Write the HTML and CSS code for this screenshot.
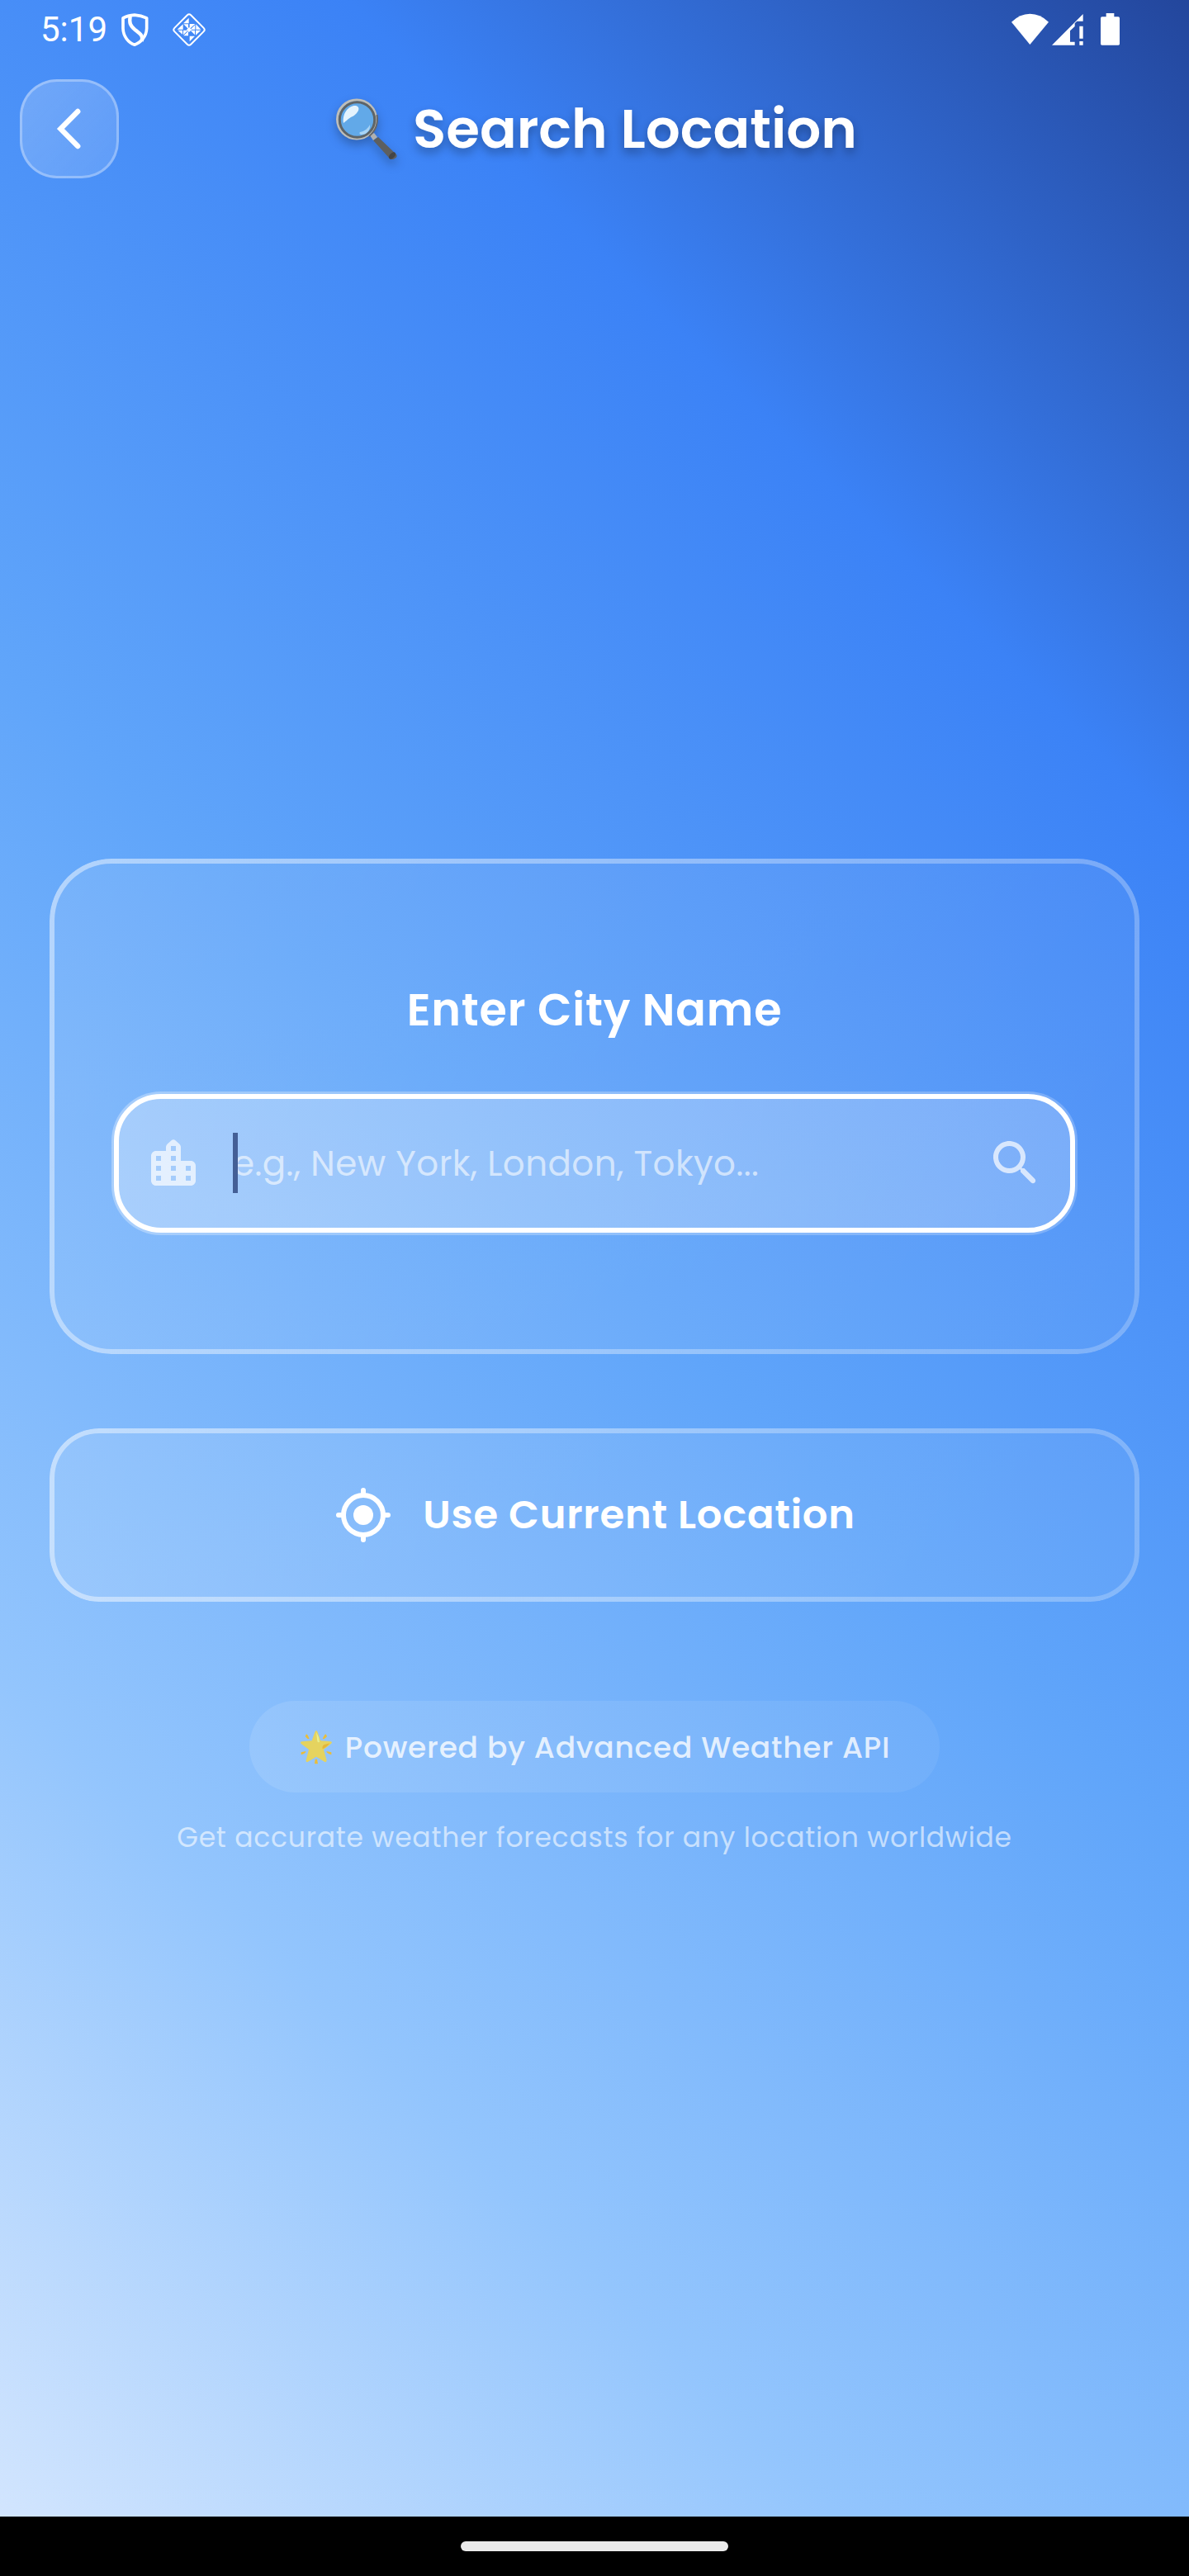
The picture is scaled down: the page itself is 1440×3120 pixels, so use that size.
FILE: index.html
```html
<!DOCTYPE html>
<html lang="en">
<head>
<meta charset="utf-8">
<title>Search Location</title>
<link rel="stylesheet" href="styles.css">
</head>
<body>
<div class="screen">
  <div class="status">
    <span class="clock">5:19</span>
    <svg class="shield" viewBox="0 0 105 125" fill="none" stroke="#fff" stroke-width="11" stroke-linejoin="round">
      <path d="M51 9 C37 10 20 14 9 20 V58 C10 86 28 110 51 117 C74 110 94 86 95 58 V20 C82 14 65 10 51 9 Z"/>
      <path d="M35 14 C31 38 35 47 52 62 C72 78 83 84 77 104" stroke-width="13"/>
    </svg>
    <svg class="diamond" viewBox="0 0 126 126">
      <rect x="21" y="21" width="84" height="84" rx="9" transform="rotate(45 63 63)" fill="none" stroke="#fff" stroke-width="6"/>
      <g fill="#fff">
        <path d="M62 20 V40 H42 Z M65 42 H85 L65 60 Z M41 43 V62 H20 Z M43 43 H60 V60 Z M88 43 L106 62 H88 Z M85 45 V62 H68 Z M63 54 L72 63 L63 72 L54 63 Z M42 65 H59 L42 82 Z M22 65 H39 V80 Z M84 65 H68 L84 82 Z M87 65 H106 L87 83 Z M43 85 H60 V68 Z M65 86 H84 L65 106 Z"/>
      </g>
    </svg>
    <svg class="signals" viewBox="0 0 393 117" fill="#fff">
      <path d="M0 32 Q30 2 67 2 Q105 2 135 32 L67 114 Z"/>
      <path d="M147 116 L260 3 V29 H238 L230 37 V48 L213 64 V104 H230 V116 Z M247 47 H260 V92 H247 Z M247 102 H260 V116 H247 Z"/>
      <path d="M344 0 H373 V13 H388 Q393 13 393 18 V112 Q393 116 388 116 H329 Q324 116 324 112 V18 Q324 13 329 13 H344 Z"/>
    </svg>
  </div>

  <header class="header">
    <button class="back" aria-label="Back">
      <svg viewBox="0 0 72 72" fill="none" stroke="#fff" stroke-width="6.4" stroke-linecap="round" stroke-linejoin="miter"><path d="M46.2 15 L25.4 36 L46.2 57"/></svg>
    </button>
    <h1 class="title">
      <svg class="lens" viewBox="0 0 74 74">
        <path d="M45 51 L51 47 L73 68 Q75 71 71 73 Q67 76 64 72 Z" fill="#5d5f60"/>
        <ellipse cx="68" cy="69.500" rx="3" ry="5" transform="rotate(45 68 69.500)" fill="#454545"/>
        <path d="M41 45 L46 42 L50 47 L45 51 Z" fill="#b0b0b0"/>
        <circle cx="25" cy="25.500" r="23.500" fill="#62a9e8" stroke="#bdbdb9" stroke-width="3"/>
        <circle cx="25.500" cy="26" r="21.200" fill="none" stroke="#5e6467" stroke-width="3"/>
        <path d="M49.500 20 Q52 36 40 46" fill="none" stroke="#666" stroke-width="2"/>
        <path d="M9 30 C7 18 16 8 24 9 C31 11 26 19 20 22 C14 25 12 28 9 30 Z" fill="#e4f3fd"/>
        <path d="M29 41 C35 40 39 36 41 32 C42 39 36 45 30 44 C28 43 28 42 29 41 Z" fill="#a9d4f5"/>
      </svg>
      <span class="title-text">Search Location</span>
    </h1>
  </header>

  <main class="main">
    <section class="glass card">
      <h2 class="label">Enter City Name</h2>
      <div class="field-ring">
        <div class="field">
          <svg class="icon city" viewBox="0 0 24 24" fill="#fff"><path fill-rule="evenodd" d="M15 11V5.600c0-.6-.2-1-.6-1.400l-1.700-1.500c-.4-.4-1-.4-1.400 0L9.600 4.200C9.200 4.600 9 5 9 5.600V7H5c-1.100 0-2 .9-2 2v10c0 1.100.9 2 2 2h14c1.100 0 2-.9 2-2v-6c0-1.100-.9-2-2-2h-4zM7 19H5v-2h2v2zm0-4H5v-2h2v2zm0-4H5V9h2v2zm6 8h-2v-2h2v2zm0-4h-2v-2h2v2zm0-4h-2V9h2v2zm0-4h-2V5h2v2zm6 12h-2v-2h2v2zm0-4h-2v-2h2v2z"/></svg>
          <div class="entry"><span class="caret"></span><span class="hint">e.g., New York, London, Tokyo...</span></div>
          <svg class="icon search" viewBox="0 0 24 24" fill="#fff"><path d="M15.500 14h-.790l-.280-.270c1.200-1.400 1.820-3.310 1.480-5.340-.470-2.780-2.790-5-5.590-5.340-4.230-.520-7.780 3.040-7.270 7.270.340 2.800 2.560 5.120 5.340 5.590 2.030.340 3.940-.280 5.340-1.480l.270.280v.790l4.250 4.250c.410.410 1.080.410 1.490 0 .410-.410.410-1.080 0-1.490L15.500 14zm-6 0C7.010 14 5 11.990 5 9.500S7.010 5 9.500 5 14 7.010 14 9.500 11.990 14 9.500 14z"/></svg>
        </div>
      </div>
    </section>

    <button class="glass locate">
      <svg class="icon" viewBox="0 0 24 24" fill="none" stroke="#fff" stroke-width="2"><circle cx="12" cy="12" r="4" fill="#fff" stroke="none"/><circle cx="12" cy="12" r="8"/><path d="M12 2v2M12 20v2M2 12h2M20 12h2" stroke-linecap="round"/></svg>
      <span>Use Current Location</span>
    </button>

    <div class="powered">
      <svg class="star" viewBox="0 0 118 126">
        <path d="M59 3 Q62 3 64 9 L75 40 L112 43 Q119 45 113 51 L86 72 L97 111 Q97 119 90 117 L59 98 L28 117 Q20 119 22 111 L32 72 L4 51 Q-1 45 6 43 L43 40 L54 9 Q56 3 59 3 Z" fill="#e5d35f"/>
        <path d="M59 9 Q70 26 71 44 Q66 48 63 42 Z" fill="#e8f08e"/><path d="M109 49 L88 54 Q79 60 82 70 Q92 68 109 49 Z" fill="#e3b63a"/>
        <path d="M22 17 Q28 15 34 34 Q26 34 19 25 Z M95 17 Q89 15 82 34 Q91 34 98 25 Z M4 82 L21 78 Q21 87 4 91 Z M114 82 L96 78 Q97 87 114 91 Z M55 107 H62 L65 124 H53 Z" fill="#e9bd3c"/>
      </svg>
      <span>Powered by Advanced Weather API</span>
    </div>
    <p class="note">Get accurate weather forecasts for any location worldwide</p>
  </main>

  <div class="navbar"><span class="handle"></span></div>
</div>
</body>
</html>
```
FILE: styles.css
```css
* { box-sizing: border-box; margin: 0; }

body {
  width: 1440px;
  font-family: Poppins, Inter, "Open Sans", sans-serif;
  color: #fff;
  white-space: nowrap;
}

button { font: inherit; color: inherit; padding: 0; }
svg { display: block; flex: none; }

.screen {
  display: flex;
  flex-direction: column;
  width: 1440px;
  height: 3120px;
  background: linear-gradient(225deg, #23469c 0%, #3b82f6 22.700%, #60a5fa 50%, #93c5fd 77.300%, #d2e5fe 100%) 0 0 / 100% 3048px no-repeat;
}

/* Status bar */
.status {
  display: flex;
  align-items: flex-start;
  height: 72px;
  padding: 15px 84px 0 49px;
}
.clock { font: 400 42px/42px Roboto, sans-serif; width: 97px; }
.shield { width: 35px; height: 42px; }
.diamond { width: 42px; height: 42px; margin-left: 27px; }
.signals { width: 131px; height: 39px; margin: 1px 0 0 auto; }

/* Header */
.header {
  display: grid;
  grid-template-columns: 120px 1fr 120px;
  align-items: center;
  padding: 24px 24px 0;
}
.back {
  display: flex;
  align-items: center;
  justify-content: center;
  width: 120px;
  height: 120px;
  border: 3px solid rgba(255, 255, 255, .3);
  border-radius: 45px;
  background: linear-gradient(135deg, rgba(255, 255, 255, .22), rgba(255, 255, 255, .12)) border-box;
}
.back svg { width: 72px; height: 72px; }
.title {
  display: flex;
  align-items: center;
  justify-content: center;
  gap: 19px;
  padding-left: 5px;
  font-size: 66px;
  font-weight: 600;
  line-height: 84px;
}
.lens { width: 74px; height: 74px; filter: drop-shadow(0 6px 6px rgba(0, 0, 0, .25)); }
.title-text { text-shadow: 0 6px 12px rgba(0, 0, 0, .3); }

/* Frosted panels */
.main {
  display: flex;
  flex-direction: column;
  align-items: center;
  flex: 1;
  padding: 823.500px 60px 0;
}
.glass { position: relative; width: 1320px; border: 0; }
.glass::before {
  content: "";
  position: absolute;
  inset: 0;
  padding: 6px;
  border-radius: inherit;
  background: linear-gradient(var(--slant), rgba(255, 255, 255, .45), rgba(255, 255, 255, .22));
  mask: linear-gradient(#000 0 0) content-box exclude, linear-gradient(#000 0 0);
}
.card {
  --slant: 114.400deg;
  height: 600px;
  padding: 144px 75px;
  border-radius: 75px;
  background: linear-gradient(114.400deg, rgba(255, 255, 255, .1), rgba(255, 255, 255, .05));
}
.label {
  height: 138px;
  font-size: 54px;
  font-weight: 600;
  line-height: 78px;
  letter-spacing: .8px;
  text-align: center;
}
.field-ring {
  height: 174px;
  padding: 3px;
  border-radius: 60px;
  background: linear-gradient(98deg, rgba(255, 255, 255, .31), rgba(255, 255, 255, .22));
}
.field {
  display: flex;
  align-items: center;
  gap: 36px;
  height: 168px;
  padding: 0 30px;
  border: 6px solid #fff;
  border-radius: 57px;
}
.icon { width: 72px; height: 72px; }
.city,
.search { opacity: .7; }
.entry { display: flex; flex: 1; align-items: center; }
.caret { width: 6px; height: 73px; margin-right: -6px; background: #445f96; z-index: 1; }
.hint {
  padding-top: 2px;
  font-size: 42px;
  line-height: 60px;
  letter-spacing: .45px;
  color: rgba(255, 255, 255, .6);
}

.locate {
  --slant: 99deg;
  display: flex;
  align-items: center;
  justify-content: center;
  gap: 36px;
  height: 210px;
  margin-top: 90px;
  border-radius: 60px;
  background: linear-gradient(99deg, rgba(255, 255, 255, .12), rgba(255, 255, 255, .06));
  font-size: 48px;
  font-weight: 600;
  letter-spacing: .78px;
}

/* Footer notes */
.powered {
  display: flex;
  align-items: center;
  gap: 15px;
  height: 111px;
  margin-top: 120px;
  padding: 2px 60px 0 61px;
  border-radius: 56px;
  background: linear-gradient(90deg, rgba(255, 255, 255, .11), rgba(255, 255, 255, .06));
  color: rgba(255, 255, 255, .8);
  font-size: 36px;
  font-weight: 500;
  letter-spacing: .75px;
}
.star { width: 40px; height: 42px; }
.note {
  margin-top: 31px;
  font-size: 33px;
  line-height: 48px;
  letter-spacing: .75px;
  color: rgba(255, 255, 255, .6);
}

/* System navigation */
.navbar {
  display: flex;
  justify-content: center;
  height: 72px;
  padding-top: 30px;
  background: #000;
}
.handle { width: 324px; height: 12px; border-radius: 6px; background: #ebebeb; }
```
